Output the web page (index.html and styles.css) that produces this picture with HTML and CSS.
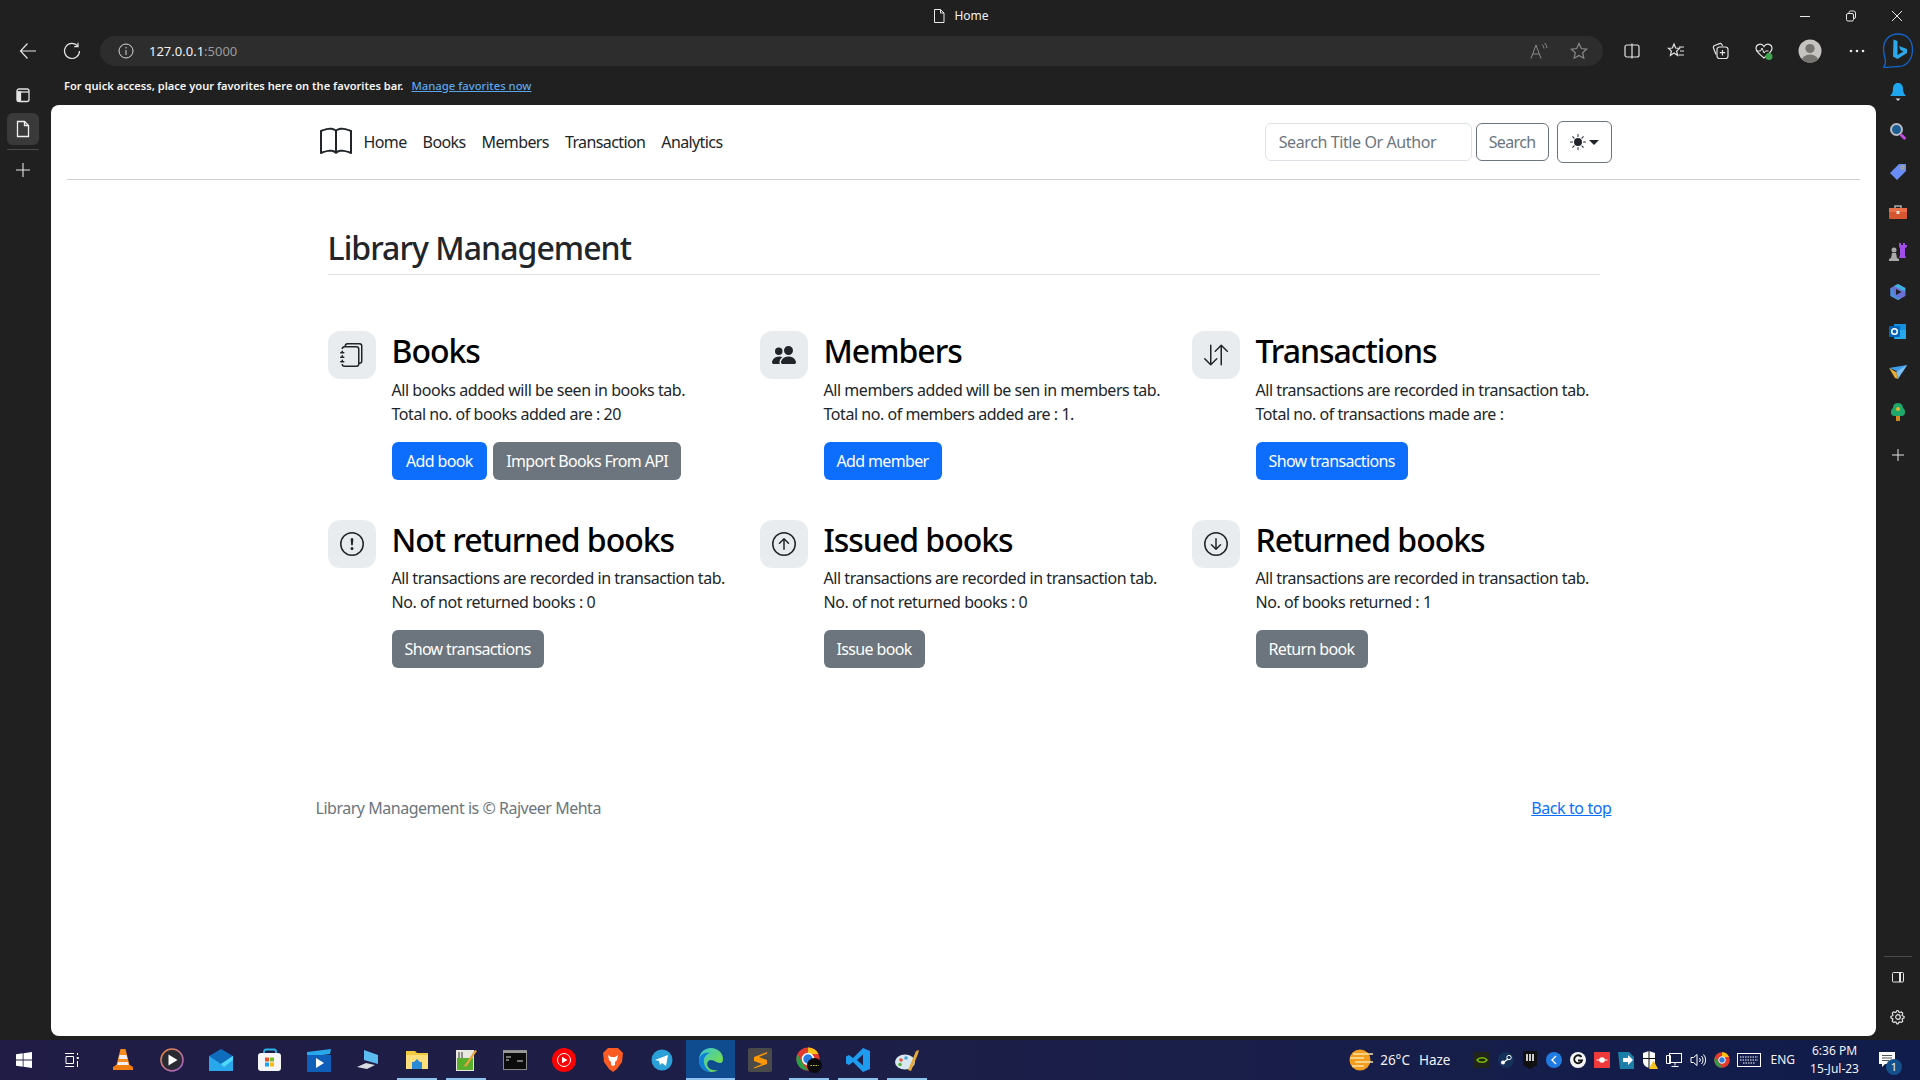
FILE: index.html
```html
<!DOCTYPE html>
<html lang="en">
<head>
  <meta charset="UTF-8" />
  <title>Home</title>
  <link rel="stylesheet" href="styles.css">
</head>
<body>
  <!-- browser frame -->
  <div class="titlebar">
    <div></div>
    <div class="tab-title">
      <svg width="16" height="16" viewBox="0 0 16 16" fill="none" stroke="#e8e8e8"><path d="M3.5 1.5h6l3.5 3.5v9.5h-9.5z M9.5 1.5v3.5h3.5"/></svg>
      <span>Home</span>
    </div>
    <div class="win-controls">
      <span class="win-btn"><svg width="12" height="12" viewBox="0 0 12 12" stroke="#e8e8e8"><path d="M1 6.5h10"/></svg></span>
      <span class="win-btn"><svg width="12" height="12" viewBox="0 0 12 12" fill="none" stroke="#e8e8e8"><rect x="1.5" y="3.5" width="7" height="7.5" rx="1.5"/><path d="M4 3.5V2.5a1.5 1.5 0 0 1 1.500-1.500h3a2 2 0 0 1 2 2v4a1.500 1.500 0 0 1-1.500 1.500h-.5"/></svg></span>
      <span class="win-btn"><svg width="12" height="12" viewBox="0 0 12 12" stroke="#e8e8e8"><path d="M1 1l10 10M11 1L1 11"/></svg></span>
    </div>
  </div>

  <div class="toolbar">
    <span class="tool"><svg width="18" height="18" viewBox="0 0 18 18" fill="none" stroke="#e4e4e4" stroke-width="1.2"><path d="M17 9H1.500M8.500 1.500L1.500 9l7 7.500"/></svg></span>
    <span class="tool"><svg width="18" height="18" viewBox="0 0 18 18" fill="none" stroke="#e4e4e4" stroke-width="1.2"><path d="M14.800 4.200A7.500 7.500 0 1 0 16.500 9M15 .8v3.800h-3.800"/></svg></span>
    <div class="omnibox">
      <svg width="16" height="16" viewBox="0 0 16 16" fill="none" stroke="#d8d8d8"><circle cx="8" cy="8" r="7"/><path d="M8 7v5M8 4v1.500"/></svg>
      <span class="url">127.0.0.1<span class="url-port">:5000</span></span>
      <span class="omni-right">
        <svg width="18" height="18" viewBox="0 0 18 18" fill="none" stroke="#8a8a8a"><path d="M1 16.500L6 3l5 13.500M2.800 12h6.400M12 2.500a5 5 0 0 1 2 4M14.500 1a7 7 0 0 1 2.500 5"/></svg>
        <svg width="18" height="18" viewBox="0 0 18 18" fill="none" stroke="#8a8a8a" stroke-width="1.2"><path d="M9 1.500l2.300 5 5.400.6-4 3.700 1.100 5.400L9 13.500l-4.800 2.700 1.100-5.400-4-3.700 5.400-.6z"/></svg>
      </span>
    </div>
    <div class="tool-group">
      <span class="tool"><svg width="18" height="18" viewBox="0 0 18 18" fill="none" stroke="#e4e4e4" stroke-width="1.2"><rect x="2" y="3" width="14" height="12" rx="2"/><path d="M9 1.500v15"/></svg></span>
      <span class="tool"><svg width="18" height="18" viewBox="0 0 18 18" fill="none" stroke="#e4e4e4" stroke-width="1.2"><path d="M7 2l1.600 4 4 .3-3 2.800 1 4.400L7 11l-3.600 2.500 1-4.400-3-2.800 4-.3zM12 5h5M13 9h4M11.500 13H17"/></svg></span>
      <span class="tool"><svg width="18" height="18" viewBox="0 0 18 18" fill="none" stroke="#e4e4e4" stroke-width="1.2"><path d="M5 12.500L2.500 6a2 2 0 0 1 1.200-2.500L8.500 1.600a2 2 0 0 1 2.500 1.200l.5 1.200"/><rect x="6" y="5" width="11" height="11.500" rx="2.500"/><path d="M11.500 8v5.500M8.800 10.700h5.400"/></svg></span>
      <span class="tool"><svg width="20" height="20" viewBox="0 0 20 20" fill="none"><path d="M10 5.500C8 2 2 2.500 2 7.500c0 3 3 5.500 8 9.500 5-4 8-6.500 8-9.500 0-5-6-5.500-8-2z" stroke="#e4e4e4" stroke-width="1.200"/><path d="M2.500 10h4l1.500-3 2 5 1.500-2h3" stroke="#e4e4e4"/><circle cx="15" cy="15.500" r="3.500" fill="#3fa34d"/></svg></span>
      <span class="tool tool-wide"><svg width="24" height="24" viewBox="0 0 24 24"><defs><clipPath id="av"><circle cx="12" cy="12" r="11.500"/></clipPath></defs><circle cx="12" cy="12" r="11.500" fill="#c6c4c0"/><g clip-path="url(#av)" fill="#77756f"><circle cx="12" cy="9.500" r="4.600"/><ellipse cx="12" cy="22" rx="8.500" ry="6.500"/></g></svg></span>
      <span class="tool tool-wide"><svg width="16" height="4" viewBox="0 0 16 4" fill="#e8e8e8"><circle cx="2" cy="2" r="1.300"/><circle cx="8" cy="2" r="1.300"/><circle cx="14" cy="2" r="1.300"/></svg></span>
      <span class="tool tool-bing"><svg width="32" height="38" viewBox="0 0 32 38" fill="none"><path d="M16 2C7 2 1.500 8.500 1.500 17c0 5 2 9 2 13 0 2-.8 3.500-1.800 5 5.500 1 9-.5 14.300-.5 9 0 14.500-7.500 14.500-17C30.500 8.500 25 2 16 2z" stroke="#1464c8" stroke-width="1.300"/><path d="M11.500 7.500l4 1.500v14l6-3.500-3-1.500-1.500-4 8 3v4l-9.500 6-4.500-2.500z" fill="#2ba7ea"/></svg></span>
    </div>
  </div>

  <div class="workspace">
    <aside class="side-left">
      <span class="side-btn"><svg width="16" height="16" viewBox="0 0 16 16" fill="none" stroke="#e4e4e4" stroke-width="1.300"><rect x="2" y="2" width="12" height="12.500" rx="2"/><path d="M2 5h12"/><path d="M2.500 5h3v9h-3z" fill="#e4e4e4"/></svg></span>
      <span class="side-btn side-active"><svg width="16" height="18" viewBox="0 0 16 18" fill="none" stroke="#f0f0f0" stroke-width="1.300"><path d="M2.500 1.500h7l4 4v11h-11z" fill="#3a3a3a"/><path d="M9.500 1.500v4h4"/></svg></span>
      <span class="side-sep"></span>
      <span class="side-btn"><svg width="16" height="16" viewBox="0 0 16 16" stroke="#e4e4e4" stroke-width="1.100"><path d="M8 1v14M1 8h14"/></svg></span>
    </aside>

    <div class="center-col">
      <div class="favbar">
        <span>For quick access, place your favorites here on the favorites bar.</span>
        <a class="fav-link" href="#">Manage favorites now</a>
      </div>

      <!-- the page itself -->
      <div class="page">
        <header class="site-header">
          <nav class="navbar">
            <svg class="brand" width="32" height="32" viewBox="0 0 16 16" fill="#212529"><path d="M1 2.828c.885-.37 2.154-.769 3.388-.893 1.33-.134 2.458.063 3.112.752v9.746c-.935-.53-2.120-.603-3.213-.493-1.180.120-2.370.461-3.287.811V2.828zm7.500-.141c.654-.689 1.782-.886 3.112-.752 1.234.124 2.503.523 3.388.893v9.923c-.918-.350-2.107-.692-3.287-.810-1.094-.111-2.278-.039-3.213.492V2.687zM8 1.783C7.015.936 5.587.810 4.287.940c-1.514.153-3.042.672-3.994 1.105A.5.5 0 0 0 0 2.500v11a.5.5 0 0 0 .707.455c.882-.4 2.303-.881 3.680-1.020 1.409-.142 2.590.087 3.223.877a.5.5 0 0 0 .780 0c.633-.790 1.814-1.019 3.222-.877 1.378.139 2.800.620 3.681 1.020A.5.5 0 0 0 16 13.500v-11a.5.5 0 0 0-.293-.455c-.952-.433-2.480-.952-3.994-1.105C10.413.809 8.985.936 8 1.783z"/></svg>
            <a class="nav-link" href="#">Home</a>
            <a class="nav-link" href="#">Books</a>
            <a class="nav-link" href="#">Members</a>
            <a class="nav-link" href="#">Transaction</a>
            <a class="nav-link" href="#">Analytics</a>
            <form class="search-form">
              <input class="search-input" type="text" placeholder="Search Title Or Author" />
              <button class="btn btn-outline" type="button">Search</button>
            </form>
            <button class="btn theme-btn" type="button">
              <svg width="16" height="16" viewBox="0 0 16 16" fill="#212529"><path d="M8 12a4 4 0 1 0 0-8 4 4 0 0 0 0 8zM8 0a.5.5 0 0 1 .5.5v2a.5.5 0 0 1-1 0v-2A.5.5 0 0 1 8 0zm0 13a.5.5 0 0 1 .5.5v2a.5.5 0 0 1-1 0v-2A.5.5 0 0 1 8 13zm8-5a.5.5 0 0 1-.5.5h-2a.5.5 0 0 1 0-1h2a.5.5 0 0 1 .5.5zM3 8a.5.5 0 0 1-.5.5h-2a.5.5 0 0 1 0-1h2A.5.5 0 0 1 3 8zm10.657-5.657a.5.5 0 0 1 0 .707l-1.414 1.415a.5.5 0 1 1-.707-.708l1.414-1.414a.5.5 0 0 1 .707 0zm-9.193 9.193a.5.5 0 0 1 0 .707L3.050 13.657a.5.5 0 0 1-.707-.707l1.414-1.414a.5.5 0 0 1 .707 0zm9.193 2.121a.5.5 0 0 1-.707 0l-1.414-1.414a.5.5 0 0 1 .707-.707l1.414 1.414a.5.5 0 0 1 0 .707zM4.464 4.465a.5.5 0 0 1-.707 0L2.343 3.050a.5.5 0 1 1 .707-.707l1.414 1.414a.5.5 0 0 1 0 .708z"/></svg>
              <span class="caret"></span>
            </button>
          </nav>
        </header>

        <main class="content">
          <h2 class="page-title">Library Management</h2>
          <div class="features">
            <div class="feature">
              <div class="feature-icon">
                <svg width="24" height="24" viewBox="0 0 16 16" fill="#212529"><path d="M5 0h8a2 2 0 0 1 2 2v10a2 2 0 0 1-2 2 2 2 0 0 1-2 2H3a2 2 0 0 1-2-2h1a1 1 0 0 0 1 1h8a1 1 0 0 0 1-1V4a1 1 0 0 0-1-1H3a1 1 0 0 0-1 1H1a2 2 0 0 1 2-2h8a2 2 0 0 1 2 2v9a1 1 0 0 0 1-1V2a1 1 0 0 0-1-1H5a1 1 0 0 0-1 1H3a2 2 0 0 1 2-2z"/><path d="M1 6v-.5a.5.5 0 0 1 1 0V6h.5a.5.5 0 0 1 0 1h-2a.5.5 0 0 1 0-1H1zm0 3v-.5a.5.5 0 0 1 1 0V9h.5a.5.5 0 0 1 0 1h-2a.5.5 0 0 1 0-1H1zm0 2.500v.5H.5a.5.5 0 0 0 0 1h2a.5.5 0 0 0 0-1H2v-.5a.5.5 0 0 0-1 0z"/></svg>
              </div>
              <div class="feature-body">
                <h3>Books</h3>
                <p>All books added will be seen in books tab.<br>Total no. of books added are : 20</p>
                <div class="feature-actions">
                  <a class="btn btn-primary btn-roomy" href="#">Add book</a>
                  <a class="btn btn-secondary" href="#">Import Books From API</a>
                </div>
              </div>
            </div>
            <div class="feature">
              <div class="feature-icon">
                <svg width="24" height="24" viewBox="0 0 16 16" fill="#212529"><path d="M7 14s-1 0-1-1 1-4 5-4 5 3 5 4-1 1-1 1H7Zm4-6a3 3 0 1 0 0-6 3 3 0 0 0 0 6Zm-5.784 6A2.238 2.238 0 0 1 5 13c0-1.355.680-2.750 1.936-3.720A6.325 6.325 0 0 0 5 9c-4 0-5 3-5 4s1 1 1 1h4.216ZM4.500 8a2.500 2.500 0 1 0 0-5 2.500 2.500 0 0 0 0 5Z"/></svg>
              </div>
              <div class="feature-body">
                <h3>Members</h3>
                <p>All members added will be sen in members tab.<br>Total no. of members added are : 1.</p>
                <div class="feature-actions">
                  <a class="btn btn-primary" href="#">Add member</a>
                </div>
              </div>
            </div>
            <div class="feature">
              <div class="feature-icon">
                <svg width="24" height="24" viewBox="0 0 16 16" fill="#212529"><path d="M11.500 15a.5.5 0 0 0 .5-.5V2.707l3.146 3.147a.5.5 0 0 0 .708-.708l-4-4a.5.5 0 0 0-.708 0l-4 4a.5.5 0 1 0 .708.708L11 2.707V14.500a.5.5 0 0 0 .5.5zm-7-14a.5.5 0 0 1 .5.5v11.793l3.146-3.147a.5.5 0 0 1 .708.708l-4 4a.5.5 0 0 1-.708 0l-4-4a.5.5 0 0 1 .708-.708L4 13.293V1.500a.5.5 0 0 1 .5-.5z"/></svg>
              </div>
              <div class="feature-body">
                <h3>Transactions</h3>
                <p>All transactions are recorded in transaction tab.<br>Total no. of transactions made are :</p>
                <div class="feature-actions">
                  <a class="btn btn-primary" href="#">Show transactions</a>
                </div>
              </div>
            </div>
            <div class="feature">
              <div class="feature-icon">
                <svg width="24" height="24" viewBox="0 0 16 16" fill="#212529"><path d="M8 15A7 7 0 1 1 8 1a7 7 0 0 1 0 14zm0 1A8 8 0 1 0 8 0a8 8 0 0 0 0 16z"/><path d="M7.002 11a1 1 0 1 1 2 0 1 1 0 0 1-2 0zM7.100 4.995a.905.905 0 1 1 1.800 0l-.35 3.507a.552.552 0 0 1-1.100 0L7.100 4.995z"/></svg>
              </div>
              <div class="feature-body">
                <h3>Not returned books</h3>
                <p>All transactions are recorded in transaction tab.<br>No. of not returned books : 0</p>
                <div class="feature-actions">
                  <a class="btn btn-secondary" href="#">Show transactions</a>
                </div>
              </div>
            </div>
            <div class="feature">
              <div class="feature-icon">
                <svg width="24" height="24" viewBox="0 0 16 16" fill="#212529"><path d="M1 8a7 7 0 1 0 14 0A7 7 0 0 0 1 8zm15 0A8 8 0 1 1 0 8a8 8 0 0 1 16 0zm-7.500 3.500a.5.5 0 0 1-1 0V5.707L5.354 7.854a.5.5 0 1 1-.708-.708l3-3a.5.5 0 0 1 .708 0l3 3a.5.5 0 0 1-.708.708L8.500 5.707V11.500z"/></svg>
              </div>
              <div class="feature-body">
                <h3>Issued books</h3>
                <p>All transactions are recorded in transaction tab.<br>No. of not returned books : 0</p>
                <div class="feature-actions">
                  <a class="btn btn-secondary" href="#">Issue book</a>
                </div>
              </div>
            </div>
            <div class="feature">
              <div class="feature-icon">
                <svg width="24" height="24" viewBox="0 0 16 16" fill="#212529"><path d="M1 8a7 7 0 1 0 14 0A7 7 0 0 0 1 8zm15 0A8 8 0 1 1 0 8a8 8 0 0 1 16 0zM8.500 4.500a.5.5 0 0 0-1 0v5.793L5.354 8.146a.5.5 0 1 0-.708.708l3 3a.5.5 0 0 0 .708 0l3-3a.5.5 0 0 0-.708-.708L8.500 10.293V4.500z"/></svg>
              </div>
              <div class="feature-body">
                <h3>Returned books</h3>
                <p>All transactions are recorded in transaction tab.<br>No. of books returned : 1</p>
                <div class="feature-actions">
                  <a class="btn btn-secondary" href="#">Return book</a>
                </div>
              </div>
            </div>
          </div>
        </main>

        <footer class="site-footer">
          <span>Library Management is © Rajveer Mehta</span>
          <a href="#">Back to top</a>
        </footer>
      </div>
    </div>

    <aside class="side-right">
      <span class="rail-btn"><svg width="18" height="20" viewBox="0 0 18 20"><path d="M9 1c-3.500 0-5 2.500-5 6 0 3-1 5-3 7h16c-2-2-3-4-3-7 0-3.500-1.500-6-5-6z" fill="#1ea7ee"/><path d="M6.500 16.500h5L9 19z" fill="#cfd8e0"/></svg></span>
      <span class="rail-btn"><svg width="18" height="20" viewBox="0 0 18 20" fill="none"><circle cx="7.500" cy="7.500" r="5.500" fill="#1c5e91" stroke="#b8bcc0" stroke-width="2"/><path d="M11.800 12.500l4.500 4.500" stroke="#c44ce0" stroke-width="3"/></svg></span>
      <span class="rail-btn"><svg width="18" height="18" viewBox="0 0 18 18"><path d="M10 1h7v7l-9 9-7-7z" fill="#6a8cf5"/><circle cx="13.500" cy="4.500" r="1.600" fill="none" stroke="#e6c21c"/></svg></span>
      <span class="rail-btn"><svg width="18" height="16" viewBox="0 0 18 16"><path d="M6 4V2h6v2" fill="none" stroke="#aaa" stroke-width="1.500"/><rect y="4" width="18" height="11" rx="1" fill="#d8562f"/><rect y="4" width="18" height="4" fill="#ea7048"/><rect x="7.500" y="7" width="3" height="3" fill="#ddd"/></svg></span>
      <span class="rail-btn"><svg width="20" height="20" viewBox="0 0 20 20"><path d="M11 1h2v2h2V1h2v2h2v2l-2 1v7l1 3H11l1-3V6l-1-1z" fill="#a24de8"/><circle cx="6" cy="8" r="2.500" fill="#a9a9a9"/><path d="M4 11h4l1 5 2 1v2H1v-2l2-1z" fill="#a9a9a9"/></svg></span>
      <span class="rail-btn"><svg width="18" height="18" viewBox="0 0 18 18"><path d="M9 1l7.500 4v8L9 17l-7.500-4V5z" fill="#6b6fd8"/><path d="M5 3l11 5.500v-3.500L9 1z" fill="#3fb4dc"/><path d="M7 6l5.500 3L7 12z" fill="#202020"/><path d="M1.500 5v8L9 17l3-1.500C6 14 4 10 4 6z" fill="#4a90d8"/></svg></span>
      <span class="rail-btn"><svg width="18" height="18" viewBox="0 0 18 18"><path d="M5 1h12v15H5z" fill="#1490df"/><path d="M9 7h8v9H6z" fill="#28a8ea"/><rect y="3" width="11" height="11" rx="1" fill="#0364b8"/><circle cx="5.500" cy="8.500" r="2.800" fill="none" stroke="#fff" stroke-width="1.500"/></svg></span>
      <span class="rail-btn"><svg width="18" height="16" viewBox="0 0 18 16"><path d="M0 4l18-3-5 8z" fill="#3f9dee"/><path d="M18 1L7 8l2 7z" fill="#7cc0f5"/><path d="M0 4l7 4 2 7-3-1z" fill="#e8a92c"/></svg></span>
      <span class="rail-btn"><svg width="16" height="20" viewBox="0 0 16 20"><path d="M8 1C4 1 3 4 3 6 1 7 1 9 1 11c0 2 2 3 3 3h8c1 0 3-1 3-3 0-2 0-4-2-5 0-2-1-5-5-5z" fill="#1ea86b"/><rect x="6" y="14" width="4" height="5" fill="#cf8a1e"/><circle cx="8" cy="7" r="2" fill="#e8b72c"/></svg></span>
      <span class="rail-btn rail-plus"><svg width="14" height="14" viewBox="0 0 14 14" stroke="#e4e4e4"><path d="M7 1v12M1 7h12"/></svg></span>
      <span class="rail-sep"></span>
      <span class="rail-btn"><svg width="14" height="14" viewBox="0 0 14 14" fill="none" stroke="#e4e4e4"><rect x="1.500" y="2.500" width="11" height="9.500" rx="1"/><path d="M9 2.500v9.500" stroke-width="2"/></svg></span>
      <span class="rail-btn"><svg width="16" height="16" viewBox="0 0 16 16" fill="none" stroke="#e4e4e4" stroke-width="1.200"><circle cx="8" cy="8" r="2.300"/><path d="M8 1.500l1.200 2 2.300-.5 1.200 1.100-.6 2.300 2 1.100v1.400l-2 1.100.6 2.300-1.200 1.100-2.300-.5-1.200 2H7l-1.200-2-2.300.5-1.200-1.100.6-2.300-2-1.100V7.500l2-1.100-.6-2.300L3.500 3l2.300.5 1.200-2z"/></svg></span>
    </aside>
  </div>

  <!-- windows taskbar -->
  <div class="taskbar">
    <span class="task task-start"><svg width="16" height="16" viewBox="0 0 16 16" fill="#fff"><path d="M0 2.300L6.700 1.300v6.300H0zM7.500 1.200L16 0v7.600H7.500zM0 8.400h6.700v6.300L0 13.700zM7.500 8.400H16V16l-8.500-1.200z"/></svg></span>
    <span class="task task-view"><svg width="16" height="16" viewBox="0 0 16 16" fill="none" stroke="#fff"><path d="M1 1.500h9M1 14.500h9M2 4.500h7.500v7H2zM13.500 1v2M13 5.500h1.500v1H13zM13.500 9v6"/></svg></span>
    <span class="task"><svg width="20" height="24" viewBox="0 0 20 24"><path d="M7.500 1h5L17 19H3z" fill="#f78a1d"/><path d="M6.500 7h7l1 4h-9zM5 14h10l.8 3H4.200z" fill="#eee"/><path d="M0 19l3-2h14l3 2v3H0z" fill="#f07d0f"/></svg></span>
    <span class="task"><svg width="24" height="24" viewBox="0 0 24 24"><defs><linearGradient id="pl" x1="0" y1="0" x2="1" y2="1"><stop offset="0" stop-color="#f08a3c"/><stop offset="1" stop-color="#9a5ed0"/></linearGradient></defs><circle cx="12" cy="12" r="11" fill="#2a2a33" stroke="url(#pl)" stroke-width="1.600"/><path d="M8.500 6.500l9 5.500-9 5.500z" fill="#fff"/></svg></span>
    <span class="task"><svg width="24" height="22" viewBox="0 0 24 22"><path d="M0 7l12-7 12 7v15H0z" fill="#0f6cbd"/><path d="M0 7l12 8 12-8v15H0z" fill="#28a8ea"/><path d="M12 15l12-8v4l-9 7z" fill="#50d9ff"/></svg></span>
    <span class="task"><svg width="24" height="24" viewBox="0 0 24 24"><path d="M6 6V3.500A2 2 0 0 1 8 1.500h8a2 2 0 0 1 2 2V6" fill="none" stroke="#29b6e8" stroke-width="1.800"/><rect y="5" width="23" height="18" rx="3" fill="#f6f6f6"/><rect x="7" y="9.500" width="4" height="4" fill="#e8512a"/><rect x="12" y="9.500" width="4" height="4" fill="#7cbb28"/><rect x="7" y="14.500" width="4" height="4" fill="#1ca4ec"/><rect x="12" y="14.500" width="4" height="4" fill="#fbb910"/></svg></span>
    <span class="task"><svg width="24" height="24" viewBox="0 0 24 24"><path d="M0 4l24-3-1 5L0 9z" fill="#28a8ea"/><path d="M0 7h24v17H0z" fill="#0f5fb8"/><path d="M9 10l8 5-8 5z" fill="#fff"/></svg></span>
    <span class="task"><svg width="24" height="22" viewBox="0 0 24 22"><path d="M8 1l14 5v9L8 11z" fill="#5cbcf0"/><path d="M1 18l9-4 9 2-8 4z" fill="#d8dde2"/></svg></span>
    <span class="task task-open"><svg width="22" height="20" viewBox="0 0 22 20"><path d="M0 1h9l2 2h11v16H0z" fill="#f5c93e"/><rect y="5" width="22" height="14" fill="#fcdf7c"/><path d="M6 12h10v7H6z" fill="#2b8ad6"/><path d="M8 12l3-3 3 3z" fill="#2b8ad6"/></svg></span>
    <span class="task task-open"><svg width="22" height="24" viewBox="0 0 22 24"><path d="M1 2h18v21H1z" fill="#e8e8e0"/><path d="M2 10h16v12H2z" fill="#5aae2e"/><path d="M4 4v6M7 4v6" stroke="#333"/><path d="M9 18L20 2l2 1-11 16z" fill="#e8a33c"/></svg></span>
    <span class="task"><svg width="24" height="20" viewBox="0 0 24 20"><rect x=".5" y=".5" width="23" height="19" fill="#0c0c0c" stroke="#888"/><path d="M0 .5h24V3H0z" fill="#999"/><path d="M3 7h5M3 10h3M14 11h6" stroke="#ddd"/></svg></span>
    <span class="task"><svg width="24" height="24" viewBox="0 0 24 24"><circle cx="12" cy="12" r="12" fill="#f00"/><circle cx="12" cy="12" r="6.500" fill="none" stroke="#fff"/><path d="M10 8.800l5.500 3.200-5.500 3.200z" fill="#fff"/></svg></span>
    <span class="task"><svg width="20" height="24" viewBox="0 0 20 24"><path d="M5 0h10l2.500 2.500L20 5l-1 9-5 7-4 3-4-3-5-7L0 5l2.500-2.500z" fill="#fb5a23"/><path d="M5 7l3 2h4l3-2-1 5-2 2v3l-2 1-2-1v-3l-2-2z" fill="#fff"/></svg></span>
    <span class="task"><svg width="22" height="22" viewBox="0 0 22 22"><circle cx="11" cy="11" r="10.500" fill="#2a9fd8"/><path d="M4 11l13-5-2 11-4-3-2 2-1-4z" fill="#fff"/></svg></span>
    <span class="task task-active"><svg width="24" height="24" viewBox="0 0 24 24"><defs><linearGradient id="edge" x1="0" y1="0" x2="1" y2="1"><stop offset="0" stop-color="#38c7d8"/><stop offset=".7" stop-color="#6fd95b"/></linearGradient></defs><path d="M12 0C5 0 0 5.500 0 12c0 7 5 12 12 12 3 0 5.500-1 7-2-4 1-9 0-10.500-4-1-3 .5-6 3.500-6 4 0 5 3 9 3 2.500 0 3-2 3-4C24 5 19 0 12 0z" fill="url(#edge)"/><path d="M0 12C1 6 6 4 11 5c-4 1-7 5-6 10 .6 3.500 3 6.500 7 9C5 24 0 19 0 12z" fill="#0f7ed8"/></svg></span>
    <span class="task"><svg width="24" height="24" viewBox="0 0 24 24"><rect width="24" height="24" rx="2" fill="#4a4a4a"/><path d="M19 4L6 9v4l8 3-8 3.500v1L19 16v-4l-8-3 8-3.500z" fill="#ff9800"/></svg></span>
    <span class="task task-open"><svg width="26" height="26" viewBox="0 0 26 26"><circle cx="12" cy="12" r="11.500" fill="#e33b2e"/><path d="M12 .5A11.500 11.500 0 0 1 22.500 7H12z" fill="#fbc116"/><path d="M1.500 7L7 17l5 6.500A11.500 11.500 0 0 1 1.500 7z" fill="#2a9d48"/><circle cx="12" cy="12" r="5.500" fill="#2a7de1" stroke="#fff" stroke-width="1.500"/><circle cx="18.500" cy="18.500" r="7.500" fill="#0a0a0a"/><path d="M14.500 18.500h8" stroke="#d8d820" stroke-dasharray="1.500 1"/></svg></span>
    <span class="task task-open"><svg width="24" height="24" viewBox="0 0 24 24"><path d="M17 0l7 3v18l-7 3L7 14l-4 3-3-1.500V8.500L3 7l4 3zM17 6.500L11 12l6 5.500z" fill="#1f9cf0"/></svg></span>
    <span class="task task-open"><svg width="24" height="24" viewBox="0 0 24 24"><ellipse cx="10" cy="14" rx="10" ry="7.500" fill="#d8e6ef"/><circle cx="6" cy="12" r="1.800" fill="#e0523a"/><circle cx="11" cy="10" r="1.800" fill="#3ea6d8"/><circle cx="5" cy="16.500" r="1.800" fill="#5aae2e"/><path d="M13 22L21 3l3-1-1 4-7 17z" fill="#e5a63a"/></svg></span>

    <div class="tray">
      <svg class="weather" width="24" height="24" viewBox="0 0 24 24"><circle cx="11" cy="12" r="10.500" fill="#f29d1f"/><path d="M4 6h20M1 10h14M6 14h18M3 18h12" stroke="#fbe3a8" stroke-width="1.600"/></svg>
      <span class="weather-temp">26°C</span>
      <span class="weather-text">Haze</span>
      <span class="tray-icon"><svg width="16" height="16" viewBox="0 0 16 16"><rect width="16" height="16" fill="#20241c"/><path d="M3 8c2-3 8-3 10 0-2 3-8 3-10 0z" fill="none" stroke="#76b900" stroke-width="1.500"/></svg></span>
      <span class="tray-icon"><svg width="16" height="16" viewBox="0 0 16 16"><circle cx="8" cy="8" r="8" fill="#14315a"/><circle cx="11" cy="5.500" r="2.200" fill="none" stroke="#fff"/><circle cx="5" cy="10.500" r="2" fill="#fff"/><path d="M6 10l4-3" stroke="#fff" stroke-width="1.300"/></svg></span>
      <span class="tray-icon"><svg width="14" height="18" viewBox="0 0 14 18"><path d="M0 0h14v14l-7 4-7-4z" fill="#111"/><path d="M3 3h2v7H3zM6 3h2v7H6zM9 3h2v7H9z" fill="#ccc"/></svg></span>
      <span class="tray-icon"><svg width="16" height="16" viewBox="0 0 16 16"><circle cx="8" cy="8" r="8" fill="#1f7be0"/><path d="M10 4L6 8l4 4" fill="none" stroke="#fff" stroke-width="1.400"/></svg></span>
      <span class="tray-icon"><svg width="16" height="16" viewBox="0 0 16 16"><circle cx="8" cy="8" r="8" fill="#f4f4f4"/><path d="M11.500 5A4 4 0 1 0 12 8.500H8" fill="none" stroke="#111" stroke-width="1.800"/></svg></span>
      <span class="tray-icon"><svg width="16" height="16" viewBox="0 0 16 16"><rect width="16" height="16" fill="#ee3a3a"/><circle cx="8" cy="8" r="2.800" fill="#fff"/><path d="M2.500 8h11" stroke="#fff"/></svg></span>
      <span class="tray-icon"><svg width="16" height="18" viewBox="0 0 16 18"><path d="M0 1h11l5 5v12H2z" fill="#1b7fa8"/><path d="M5 7h5V4l5 5-5 5v-3H5z" fill="#fff"/></svg></span>
      <span class="tray-icon"><svg width="16" height="18" viewBox="0 0 16 18"><path d="M1 2l6-2 6 2v8c0 4-3 6-6 7-3-1-6-3-6-7z" fill="#fff"/><path d="M7 0v17M1 7.500h12" stroke="#111"/><path d="M11.500 9.500L16 18H7z" fill="#f6c21c"/></svg></span>
      <span class="tray-icon"><svg width="16" height="16" viewBox="0 0 16 16" fill="none" stroke="#fff"><rect x="3.500" y="1.500" width="12" height="9"/><path d="M.5 3.500h4v8h-4zM9 10.500v3M5.500 14.500h7"/></svg></span>
      <span class="tray-icon"><svg width="16" height="16" viewBox="0 0 16 16" fill="none" stroke="#fff"><path d="M1 5.500h2.500L7 2.500v11l-3.500-3H1zM9.500 6a3 3 0 0 1 0 4M11.500 4a6 6 0 0 1 0 8M13.500 2.500a8 8 0 0 1 0 11"/></svg></span>
      <span class="tray-icon"><svg width="16" height="16" viewBox="0 0 16 16"><circle cx="8" cy="8" r="7.800" fill="#e33b2e"/><path d="M8 .2A7.800 7.800 0 0 1 15 5H8z" fill="#fbc116"/><path d="M1 5l4 6 3 4.800A7.800 7.800 0 0 1 1 5z" fill="#2a9d48"/><circle cx="8" cy="8" r="3.300" fill="#2a7de1" stroke="#fff"/></svg></span>
      <span class="tray-kbd"><svg width="24" height="14" viewBox="0 0 24 14" fill="none" stroke="#fff"><rect x=".5" y=".5" width="23" height="13"/><path d="M3 4h18M3 7h18M6 10h12" stroke-dasharray="1.500 1"/></svg></span>
      <span class="tray-lang">ENG</span>
      <div class="clock">
        <span>6:36 PM</span>
        <span>15-Jul-23</span>
      </div>
      <span class="notify">
        <svg width="16" height="16" viewBox="0 0 16 16"><path d="M0 0h16v12H6l-3 3v-3H0z" fill="#fff"/><path d="M3 3.500h10M3 6h10M3 8.500h7" stroke="#555"/></svg>
        <span class="notify-badge">1</span>
      </span>
    </div>
  </div>
</body>
</html>
```

FILE: styles.css
```css
* {
  box-sizing: border-box;
}
html, body {
  height: 100%;
}
body {
  margin: 0;
  width: 1920px;
  height: 1080px;
  overflow: hidden;
  display: flex;
  flex-direction: column;
  background-color: #202020;
  color: #212529;
  font-family: "Noto Sans", sans-serif;
  font-size: 16px;
  line-height: 24px;
}
a {
  color: inherit;
  text-decoration: none;
}

/* title bar */
.titlebar {
  display: grid;
  grid-template-columns: 1fr auto 1fr;
  align-items: center;
  height: 32px;
  flex-shrink: 0;
}
.tab-title {
  display: flex;
  align-items: center;
  gap: 7px;
  color: #f0f0f0;
  font-size: 12px;
}
.win-controls {
  display: flex;
  justify-content: flex-end;
}
.win-btn {
  display: flex;
  align-items: center;
  justify-content: center;
  width: 46px;
  height: 32px;
}

/* toolbar */
.toolbar {
  display: flex;
  align-items: center;
  height: 38px;
  padding-left: 6px;
  flex-shrink: 0;
}
.tool {
  display: flex;
  align-items: center;
  justify-content: center;
  width: 44px;
  height: 38px;
}
.tool-wide {
  width: 47px;
}
.tool-bing {
  width: 36px;
}
.omnibox {
  display: flex;
  align-items: center;
  width: 1503px;
  height: 30px;
  margin-left: 6px;
  padding: 0 15px 0 18px;
  border-radius: 15px;
  background-color: #2d2d2d;
  color: #f2f2f2;
  font-size: 13px;
}
.url {
  margin-left: 15px;
}
.url-port {
  color: #9a9a9a;
}
.omni-right {
  display: flex;
  gap: 22px;
  margin-left: auto;
}
.tool-group {
  display: flex;
  margin-left: 7px;
}

/* side rails and centre */
.workspace {
  display: flex;
  flex: 1;
  min-height: 0;
}
.side-left {
  display: flex;
  flex-direction: column;
  align-items: center;
  width: 51px;
  padding: 9px 5px 0 0;
  flex-shrink: 0;
}
.side-btn {
  display: flex;
  align-items: center;
  justify-content: center;
  width: 32px;
  height: 32px;
}
.side-active {
  margin-top: 2px;
  background-color: #3a3a3a;
  border-radius: 6px;
}
.side-sep {
  width: 32px;
  height: 1px;
  margin: 4px 0 4px;
  background-color: #4a4a4a;
}
.center-col {
  display: flex;
  flex-direction: column;
  width: 1825px;
  padding-bottom: 4px;
}
.favbar {
  display: flex;
  align-items: center;
  gap: 8px;
  height: 35px;
  padding: 0 0 3px 13px;
  color: #f4f4f4;
  font-size: 11.1px;
  font-weight: 600;
  flex-shrink: 0;
}
.fav-link {
  color: #5aa5ea;
  font-size: 11.3px;
  font-weight: 500;
  text-decoration: underline;
}
.side-right {
  display: flex;
  flex-direction: column;
  align-items: center;
  width: 44px;
  padding: 2px 0 3px;
  flex-shrink: 0;
}
.rail-btn {
  display: flex;
  align-items: center;
  justify-content: center;
  width: 40px;
  height: 40px;
  flex-shrink: 0;
}
.rail-plus {
  margin-top: 3px;
}
.rail-sep {
  width: 28px;
  height: 1px;
  margin-top: auto;
  background-color: #4a4a4a;
}

/* page */
.page {
  flex: 1;
  background-color: #fff;
  border-radius: 8px;
  overflow: hidden;
}
.site-header {
  height: 75px;
  margin: 0 16px;
  border-bottom: 1px solid #cfcfcf;
}
.navbar {
  display: flex;
  align-items: center;
  max-width: 1296px;
  height: 74px;
  margin: 0 auto;
  padding-left: 4px;
}
.brand {
  margin-right: 4px;
}
.nav-link {
  padding: 0 8px;
  letter-spacing: -0.038em;
}
.search-form {
  display: flex;
  gap: 4px;
  margin-left: auto;
}
.search-input {
  width: 207px;
  height: 38px;
  padding: 6px 13px;
  border: 1px solid #dee2e6;
  border-radius: 6px;
  font-family: inherit;
  font-size: 16px;
  letter-spacing: -0.025em;
  color: #212529;
}
.search-input::placeholder {
  color: #6c757d;
}
.btn {
  display: inline-flex;
  align-items: center;
  height: 38px;
  padding: 0 12px;
  border: 1px solid transparent;
  border-radius: 6px;
  font-family: inherit;
  font-size: 16px;
  letter-spacing: -0.04em;
  white-space: nowrap;
}
.btn-roomy {
  padding: 0 13.5px;
}
.btn-primary {
  background-color: #0d6efd;
  color: #fff;
}
.btn-secondary {
  background-color: #6c757d;
  color: #fff;
}
.btn-outline {
  background-color: #fff;
  border-color: #6c757d;
  color: #6c757d;
}
.theme-btn {
  gap: 3px;
  height: 42px;
  margin-left: 8px;
  background-color: #fff;
  border-color: #6c757d;
}
.caret {
  width: 0;
  height: 0;
  border-top: 5px solid #212529;
  border-left: 5px solid transparent;
  border-right: 5px solid transparent;
}

.content {
  max-width: 1320px;
  margin: 0 auto;
  padding: 48px 24px 0;
}
.page-title {
  margin: 0;
  padding: 1px 0 7px;
  border-bottom: 1px solid #dee2e6;
  font-size: 32px;
  font-weight: 500;
  line-height: 38.4px;
  letter-spacing: -0.03em;
}
.features {
  display: grid;
  grid-template-columns: repeat(3, 408px);
  column-gap: 24px;
  row-gap: 40px;
  margin-top: 56px;
}
.feature {
  display: flex;
  gap: 16px;
}
.feature-icon {
  display: flex;
  align-items: center;
  justify-content: center;
  width: 48px;
  height: 48px;
  border-radius: 12px;
  background-color: #e9ecef;
  flex-shrink: 0;
}
.feature-body h3 {
  margin: 0 0 7px;
  padding-top: 1px;
  color: #000;
  font-size: 32px;
  font-weight: 500;
  line-height: 38.4px;
  letter-spacing: -0.032em;
}
.feature-body p {
  margin: 0 0 16px;
  letter-spacing: -0.028em;
  white-space: nowrap;
}
.feature-actions {
  display: flex;
  gap: 6px;
}

.site-footer {
  display: flex;
  justify-content: space-between;
  max-width: 1296px;
  margin: 128px auto 0;
  color: #6c757d;
  letter-spacing: -0.03em;
}
.site-footer a {
  color: #0d6efd;
  letter-spacing: -0.025em;
  text-decoration: underline;
}

/* taskbar */
.taskbar {
  display: flex;
  align-items: stretch;
  height: 40px;
  flex-shrink: 0;
  background: linear-gradient(90deg, #201c45, #1c1f48 50%, #101c4b);
  color: #f2f2f2;
}
.task {
  display: flex;
  align-items: center;
  justify-content: center;
  width: 49px;
  height: 40px;
}
.task-start {
  width: 48px;
}
.task-view {
  width: 48px;
  margin-right: 2px;
}
.task-open {
  background: linear-gradient(#8fc3ee, #8fc3ee) center bottom / 40px 2px no-repeat;
}
.task-active {
  background-color: #0f4c8f;
  box-shadow: inset 0 -2px 0 #8fc3ee;
}
.tray {
  display: flex;
  align-items: center;
  margin-left: auto;
  padding-right: 4px;
  font-size: 13.5px;
}
.weather {
  margin-right: 7px;
}
.weather-temp {
  margin-right: 9px;
}
.weather-text {
  margin-right: 20px;
}
.tray-icon {
  display: flex;
  align-items: center;
  justify-content: center;
  width: 24px;
}
.tray-kbd {
  margin-left: 3px;
  display: flex;
}
.tray-lang {
  margin-left: 9px;
  font-size: 12px;
}
.clock {
  display: flex;
  flex-direction: column;
  align-items: center;
  margin-left: 15px;
  font-size: 12px;
  line-height: 18px;
}
.notify {
  display: flex;
  position: relative;
  margin-left: 20px;
  margin-right: 21px;
}
.notify-badge {
  position: absolute;
  left: 7px;
  top: 7px;
  width: 16px;
  height: 16px;
  border-radius: 50%;
  background-color: #14508c;
  font-size: 11px;
  line-height: 16px;
  text-align: center;
}
```
